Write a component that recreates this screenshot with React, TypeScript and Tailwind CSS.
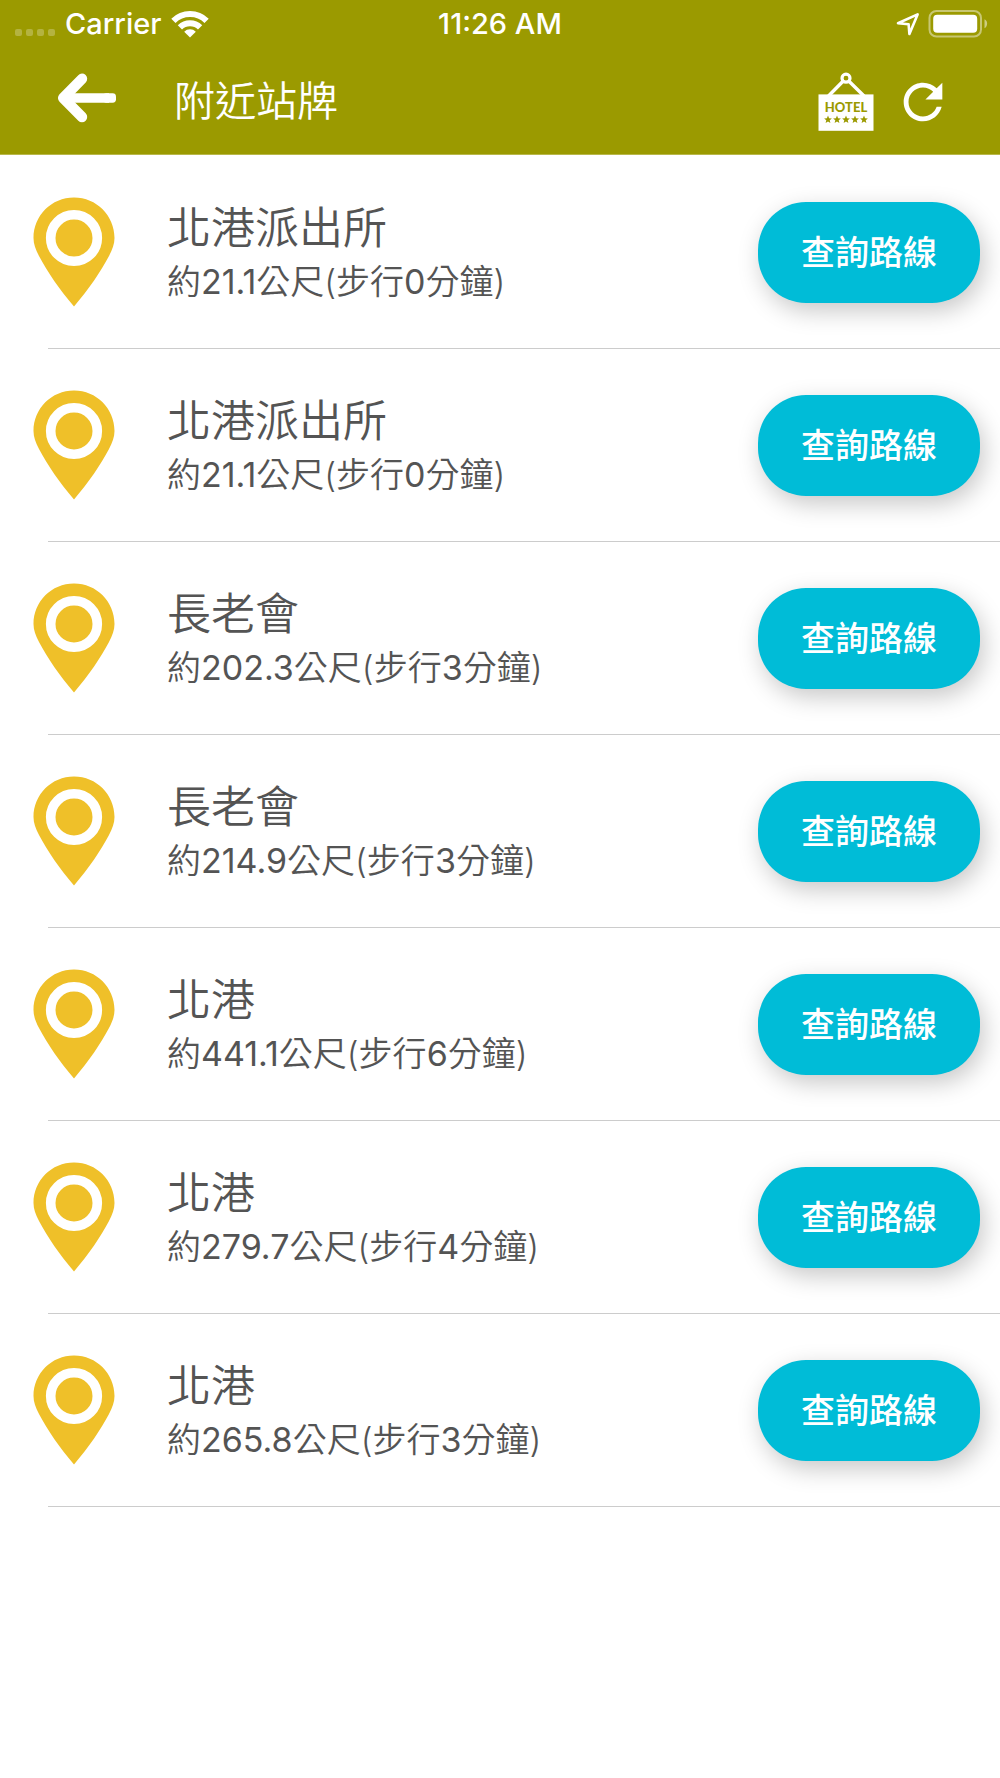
import React from 'react';

interface Stop {
  name: string;
  distance: string;
  minutes: number;
}

const stops: Stop[] = [
  { name: '北港派出所', distance: '21.1', minutes: 0 },
  { name: '北港派出所', distance: '21.1', minutes: 0 },
  { name: '長老會', distance: '202.3', minutes: 3 },
  { name: '長老會', distance: '214.9', minutes: 3 },
  { name: '北港', distance: '441.1', minutes: 6 },
  { name: '北港', distance: '279.7', minutes: 4 },
  { name: '北港', distance: '265.8', minutes: 3 },
];

function WifiIcon() {
  return (
    <svg width="38" height="28" viewBox="0 0 38 28" fill="none" stroke="white" aria-hidden="true">
      <path d="M2.4 10.9 A23.5 23.5 0 0 1 35.6 10.9" strokeWidth="6" />
      <path d="M8.9 17.4 A14.3 14.3 0 0 1 29.1 17.4" strokeWidth="6" />
      <path d="M19 27.5 L13.2 21.7 A8.3 8.3 0 0 1 24.8 21.7 Z" fill="white" stroke="none" />
    </svg>
  );
}

function LocationIcon() {
  return (
    <svg width="24" height="24" viewBox="0 0 24 24" fill="none" stroke="white" strokeWidth="2.6" strokeLinejoin="round" aria-hidden="true">
      <path d="M2 11.2 L21.6 2.4 L13.4 22 L12.6 12.2 Z" />
    </svg>
  );
}

function BatteryIcon() {
  return (
    <svg width="60" height="28" viewBox="0 0 60 28" fill="white" aria-hidden="true">
      <rect x="1.5" y="1" width="51.5" height="25.5" rx="7" fill="none" stroke="white" strokeOpacity="0.45" strokeWidth="2" />
      <rect x="5.2" y="4.7" width="44" height="18" rx="4" />
      <path d="M56.5 9.3 C60 10.7 60 16.8 56.5 18.2 Z" fillOpacity="0.5" />
    </svg>
  );
}

function BackIcon() {
  return (
    <svg width="60" height="50" viewBox="0 0 60 50" fill="none" stroke="white" strokeLinecap="round" strokeLinejoin="round" aria-hidden="true">
      <path d="M25 5.8 L6.2 25 L25 44" strokeWidth="10.4" />
      <path d="M8 25 H52" strokeWidth="9.4" strokeLinecap="butt" />
      <rect x="46" y="20.3" width="13" height="9.4" rx="3.4" fill="white" stroke="none" />
      <path d="M1 25 L6 19.6 L16 25 L6 30.4 Z" fill="white" stroke="none" />
    </svg>
  );
}

function HotelIcon() {
  return (
    <svg width="56" height="60" viewBox="0 0 56 60" aria-hidden="true">
      <circle cx="28" cy="6.2" r="4" fill="none" stroke="white" strokeWidth="3.2" />
      <path d="M25 9.2 L10.5 24 M31 9.2 L46 24" stroke="white" strokeWidth="3.4" />
      <rect x="0.5" y="22.4" width="55" height="36.4" fill="white" />
      <text x="28" y="39.6" textAnchor="middle" fontFamily="Lato, sans-serif" fontWeight="900" fontSize="13" fill="#9b9a00">
        HOTEL
      </text>
      {[10, 19, 28, 37, 46].map((x) => (
        <path
          key={x}
          transform={`translate(${x} 47.6)`}
          d="M0 -4 L1.1 -1.3 L3.9 -1.2 L1.7 0.6 L2.4 3.3 L0 1.8 L-2.4 3.3 L-1.7 0.6 L-3.9 -1.2 L-1.1 -1.3 Z"
          fill="#9b9a00"
        />
      ))}
    </svg>
  );
}

function RefreshIcon() {
  return (
    <svg width="58" height="58" viewBox="0 0 24 24" fill="white" aria-hidden="true">
      <path d="M17.65 6.35C16.2 4.9 14.21 4 12 4c-4.42 0-7.99 3.58-7.99 8s3.57 8 7.99 8c3.73 0 6.84-2.55 7.73-6h-2.08c-.82 2.33-3.04 4-5.65 4-3.31 0-6-2.69-6-6s2.69-6 6-6c1.66 0 3.14.69 4.22 1.78L13 11h7V4l-2.35 2.35z" />
    </svg>
  );
}

function PinIcon() {
  return (
    <svg className="shrink-0" width="82" height="110" viewBox="0 0 82 110" aria-hidden="true">
      <path
        d="M41 0.5 C18.5 0.5 0.5 18.5 0.5 41 C0.5 47 2.6 52.6 6 59 C14.5 75 26.5 92.5 41 109.5 C55.5 92.5 67.5 75 76 59 C79.4 52.6 81.5 47 81.5 41 C81.5 18.5 63.5 0.5 41 0.5 Z"
        fill="#efc029"
      />
      <circle cx="41" cy="41" r="23.3" fill="none" stroke="white" strokeWidth="9.6" />
    </svg>
  );
}

function StatusBar() {
  return (
    <div className="grid h-12 grid-cols-3 items-center text-[29px] leading-8 font-medium">
      <div className="flex items-center pl-[15px]">
        <div className="mr-2.5 flex gap-1 pt-4">
          {[0, 1, 2, 3].map((dot) => (
            <span key={dot} className="size-[7px] rounded-xs bg-white/25" />
          ))}
        </div>
        <span className="mr-2.5">Carrier</span>
        <WifiIcon />
      </div>
      <div className="text-center">11:26 AM</div>
      <div className="flex items-center justify-end gap-2 pr-3">
        <LocationIcon />
        <BatteryIcon />
      </div>
    </div>
  );
}

function StopRow({ stop }: { stop: Stop }) {
  return (
    <li>
      <div className="flex h-48 items-center pr-5 pl-[33px]">
        <PinIcon />
        <div className="ml-[52px] flex-1">
          <h2 className="text-[44px] leading-[60px]">{stop.name}</h2>
          <p className="text-[34px] leading-[48px]">
            約<span className="font-normal">{stop.distance}</span>公尺(步行
            <span className="font-normal">{stop.minutes}</span>分鐘)
          </p>
        </div>
        <button
          type="button"
          className="h-[101px] rounded-[48px] bg-[#00bcd7] px-[43px] text-[34px] font-medium text-white shadow-[4px_8px_24px_rgba(0,0,0,0.22)]"
        >
          查詢路線
        </button>
      </div>
      <hr className="ml-12 border-[#cccccc]" />
    </li>
  );
}

export default function App() {
  return (
    <div lang="zh-Hant" className="min-h-screen bg-white font-['Inter','Noto_Sans_CJK_TC',sans-serif] font-[350] text-[#545454]">
      <header className="border-b border-[#b9b84a] bg-[#9b9a00] text-white">
        <StatusBar />
        <div className="flex h-[106px] items-center pt-0.5 pr-12 pl-[57px]">
          <button type="button" aria-label="返回" className="mb-2">
            <BackIcon />
          </button>
          <h1 className="ml-[57px] flex-1 text-[41px]">附近站牌</h1>
          <button type="button" aria-label="飯店" className="mr-5">
            <HotelIcon />
          </button>
          <button type="button" aria-label="重新整理">
            <RefreshIcon />
          </button>
        </div>
      </header>
      <main className="pt-px">
        <ul>
          {stops.map((stop, index) => (
            <StopRow key={index} stop={stop} />
          ))}
        </ul>
      </main>
    </div>
  );
}
